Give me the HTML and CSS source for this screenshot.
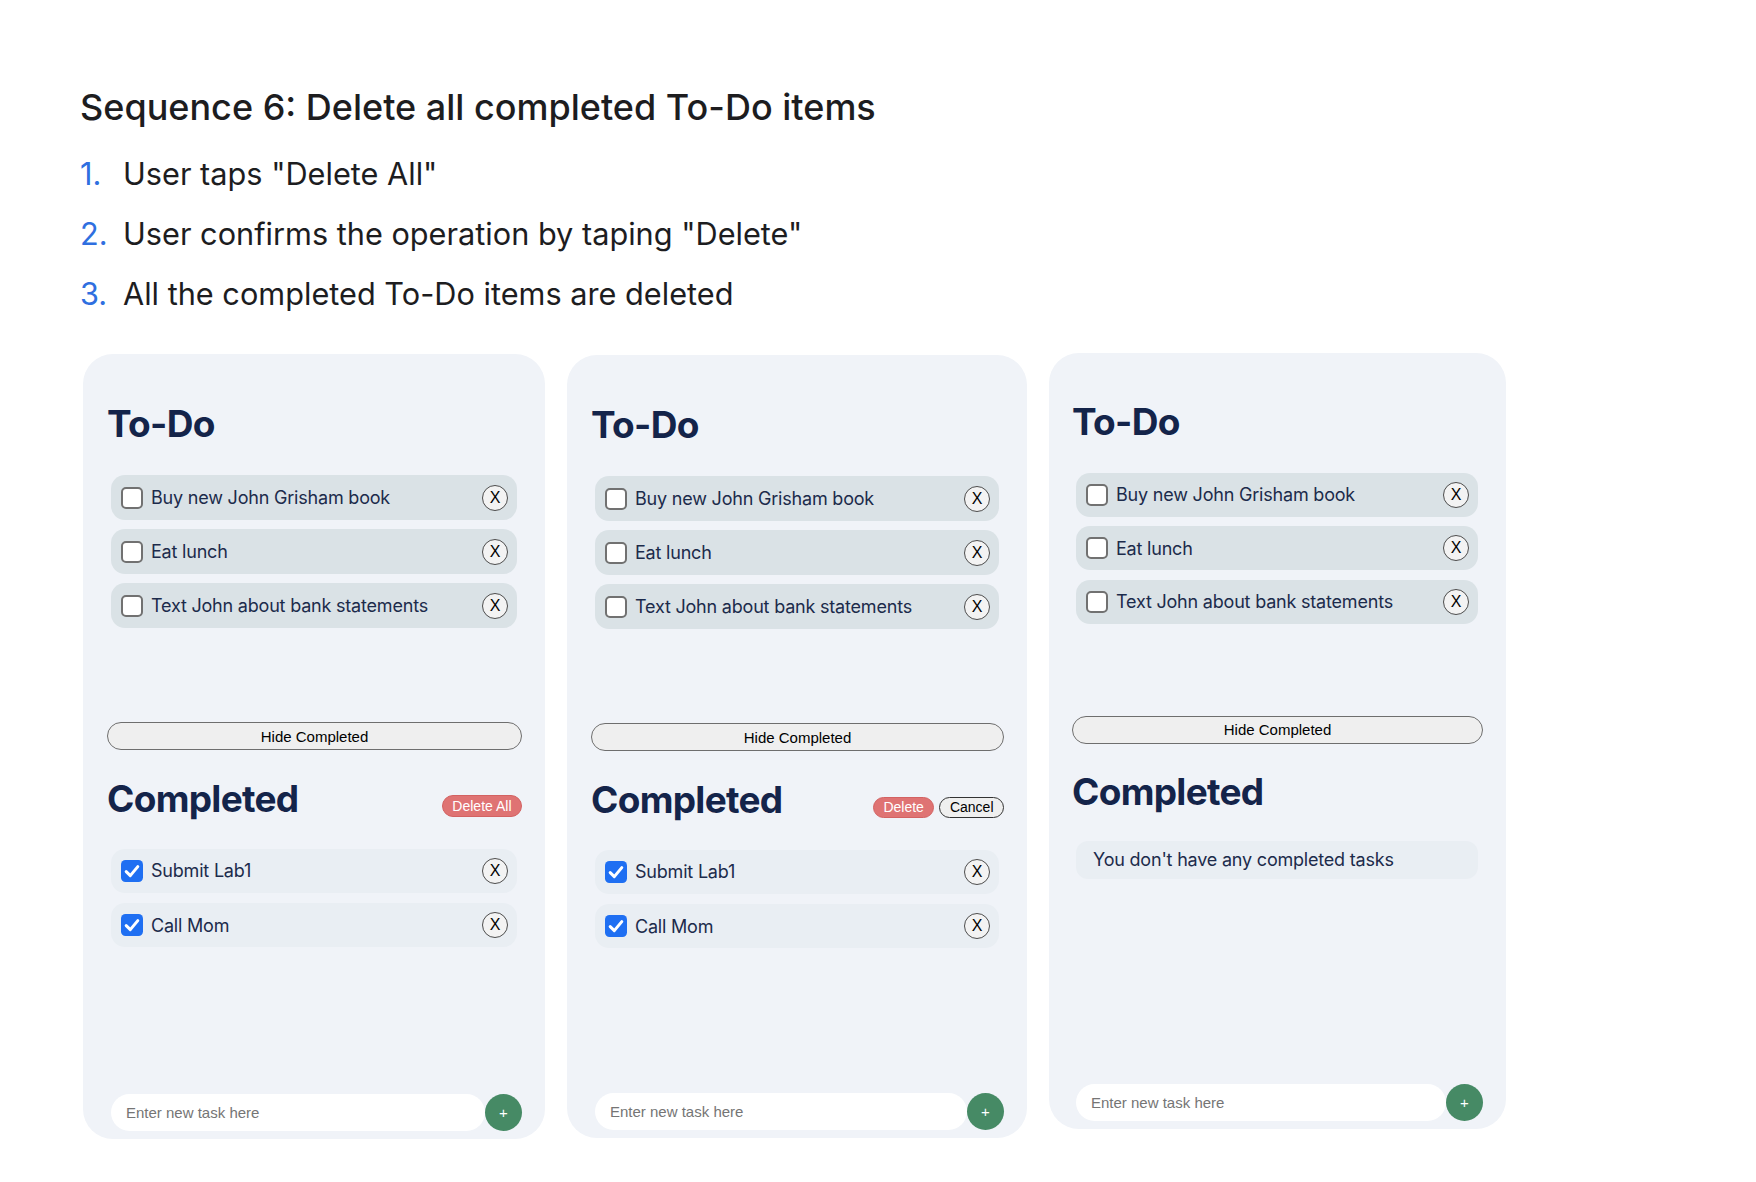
FILE: index.html
```html
<!DOCTYPE html>
<html lang="en">
<head>
<meta charset="utf-8">
<title>Sequence 6: Delete all completed To-Do items</title>
<link rel="stylesheet" href="styles.css">
</head>
<body>
<main class="page">
  <h1 class="title">Sequence 6: Delete all completed To-Do items</h1>
  <ol class="steps">
    <li class="step"><span class="step-num">1.</span><span class="step-text">User taps "Delete All"</span></li>
    <li class="step"><span class="step-num">2.</span><span class="step-text">User confirms the operation by taping "Delete"</span></li>
    <li class="step"><span class="step-num">3.</span><span class="step-text">All the completed To-Do items are deleted</span></li>
  </ol>

  <div class="screens">
    <!-- Screen 1 -->
    <section class="phone phone--a">
      <h2 class="phone-heading todo-title">To-Do</h2>
      <ul class="todo-list">
        <li class="task"><span class="box"></span><span class="task-text">Buy new John Grisham book</span><button class="remove">X</button></li>
        <li class="task"><span class="box"></span><span class="task-text">Eat lunch</span><button class="remove">X</button></li>
        <li class="task"><span class="box"></span><span class="task-text">Text John about bank statements</span><button class="remove">X</button></li>
      </ul>
      <button class="toggle">Hide Completed</button>
      <div class="done-head">
        <h2 class="phone-heading">Completed</h2>
        <div class="actions"><button class="pill pill--danger">Delete All</button></div>
      </div>
      <ul class="done-list">
        <li class="task task--done"><svg class="box-checked" viewBox="0 0 22 22" width="22" height="22"><rect x="0" y="0" width="22" height="22" rx="4.5" fill="#1f6ff2"/><path d="M5.2 11.6 L9.3 15.6 L16.8 6.6" fill="none" stroke="#fff" stroke-width="3" stroke-linecap="round" stroke-linejoin="round"/></svg><span class="task-text">Submit Lab1</span><button class="remove">X</button></li>
        <li class="task task--done"><svg class="box-checked" viewBox="0 0 22 22" width="22" height="22"><rect x="0" y="0" width="22" height="22" rx="4.5" fill="#1f6ff2"/><path d="M5.2 11.6 L9.3 15.6 L16.8 6.6" fill="none" stroke="#fff" stroke-width="3" stroke-linecap="round" stroke-linejoin="round"/></svg><span class="task-text">Call Mom</span><button class="remove">X</button></li>
      </ul>
      <div class="composer"><input class="new-task" type="text" placeholder="Enter new task here"><button class="add">+</button></div>
    </section>

    <!-- Screen 2 -->
    <section class="phone phone--b">
      <h2 class="phone-heading todo-title">To-Do</h2>
      <ul class="todo-list">
        <li class="task"><span class="box"></span><span class="task-text">Buy new John Grisham book</span><button class="remove">X</button></li>
        <li class="task"><span class="box"></span><span class="task-text">Eat lunch</span><button class="remove">X</button></li>
        <li class="task"><span class="box"></span><span class="task-text">Text John about bank statements</span><button class="remove">X</button></li>
      </ul>
      <button class="toggle">Hide Completed</button>
      <div class="done-head">
        <h2 class="phone-heading">Completed</h2>
        <div class="actions"><button class="pill pill--danger pill--sm">Delete</button><button class="pill pill--plain">Cancel</button></div>
      </div>
      <ul class="done-list">
        <li class="task task--done"><svg class="box-checked" viewBox="0 0 22 22" width="22" height="22"><rect x="0" y="0" width="22" height="22" rx="4.5" fill="#1f6ff2"/><path d="M5.2 11.6 L9.3 15.6 L16.8 6.6" fill="none" stroke="#fff" stroke-width="3" stroke-linecap="round" stroke-linejoin="round"/></svg><span class="task-text">Submit Lab1</span><button class="remove">X</button></li>
        <li class="task task--done"><svg class="box-checked" viewBox="0 0 22 22" width="22" height="22"><rect x="0" y="0" width="22" height="22" rx="4.5" fill="#1f6ff2"/><path d="M5.2 11.6 L9.3 15.6 L16.8 6.6" fill="none" stroke="#fff" stroke-width="3" stroke-linecap="round" stroke-linejoin="round"/></svg><span class="task-text">Call Mom</span><button class="remove">X</button></li>
      </ul>
      <div class="composer"><input class="new-task" type="text" placeholder="Enter new task here"><button class="add">+</button></div>
    </section>

    <!-- Screen 3 -->
    <section class="phone phone--c">
      <h2 class="phone-heading todo-title">To-Do</h2>
      <ul class="todo-list">
        <li class="task"><span class="box"></span><span class="task-text">Buy new John Grisham book</span><button class="remove">X</button></li>
        <li class="task"><span class="box"></span><span class="task-text">Eat lunch</span><button class="remove">X</button></li>
        <li class="task"><span class="box"></span><span class="task-text">Text John about bank statements</span><button class="remove">X</button></li>
      </ul>
      <button class="toggle">Hide Completed</button>
      <div class="done-head">
        <h2 class="phone-heading">Completed</h2>
      </div>
      <div class="empty">You don't have any completed tasks</div>
      <div class="composer"><input class="new-task" type="text" placeholder="Enter new task here"><button class="add">+</button></div>
    </section>
  </div>
</main>
</body>
</html>
```

FILE: styles.css
```css
* { box-sizing: border-box; }

html, body { margin: 0; background: #ffffff; }

body {
  font-family: Inter, "Noto Sans", "Liberation Sans", sans-serif;
  color: #1d1d1f;
}

.page {
  padding: 87px 0 0 80px;
}

.title {
  margin: 0;
  font-size: 36px;
  line-height: 40px;
  font-weight: 500;
  letter-spacing: 0;
  color: #1d1d1f;
}

.steps {
  list-style: none;
  margin: 17px 0 0;
  padding: 0;
}

.step {
  display: flex;
  font-size: 30.7px;
  line-height: 60px;
  font-weight: 400;
  color: #1d1d1f;
}

.step-num {
  width: 43px;
  flex: none;
  color: #2f6fe0;
}

.screens {
  display: flex;
  align-items: flex-start;
  gap: 22px;
  margin-top: 30px;
  padding-left: 3px;
}

/* ---------- phone card ---------- */
.phone {
  display: flex;
  flex-direction: column;
  flex: none;
  background: #f0f3f8;
  border-radius: 30px;
  padding: 0 23px 8px 24px;
}

.phone--a { width: 462px; height: 785px; }
.phone--b { width: 460px; height: 783px; margin-top: 1px; }
.phone--c { width: 457px; height: 776px; margin-top: -1px; padding-left: 23px; }

.phone-heading {
  margin: 0;
  font-size: 37px;
  line-height: 44px;
  font-weight: 700;
  color: #14244a;
  letter-spacing: -0.7px;
}

.todo-title { margin-top: 48px; }

.todo-list {
  list-style: none;
  margin: 29px 5px 0 4px;
  padding: 0;
  height: 247px;
  display: flex;
  flex-direction: column;
  gap: 9px;
}

.task {
  display: flex;
  align-items: center;
  height: 45px;
  flex: none;
  padding: 0 9px 0 10px;
  border-radius: 14px;
  background: #dae2e6;
}

.box {
  width: 22px;
  height: 22px;
  flex: none;
  border: 2px solid #717171;
  border-radius: 5px;
  background: #ffffff;
}

.box-checked { flex: none; display: block; }

.task-text {
  flex: 1;
  margin-left: 8px;
  font-size: 18px;
  letter-spacing: -0.2px;
  color: #1c2b4b;
  white-space: nowrap;
}

.remove {
  width: 26px;
  height: 26px;
  flex: none;
  display: flex;
  align-items: center;
  justify-content: center;
  padding: 0;
  border: 1px solid #4d4d4d;
  border-radius: 50%;
  background: #f3f3f3;
  color: #000;
  font: 16px "Liberation Sans", Arial, sans-serif;
}

.toggle {
  width: 100%;
  height: 28px;
  flex: none;
  padding: 0;
  border: 1.5px solid #6e6e6e;
  border-radius: 14px;
  background: #efefef;
  color: #000;
  font: 15px "Liberation Sans", Arial, sans-serif;
}

.done-head {
  display: flex;
  align-items: flex-end;
  justify-content: space-between;
  margin-top: 27px;
}

.actions {
  display: flex;
  gap: 5px;
  margin-bottom: 4.5px;
}

.pill {
  height: 22px;
  padding: 0 9.5px;
  border-radius: 11px;
  font: 14px "Liberation Sans", Arial, sans-serif;
}

.pill--danger {
  border: 1px solid #d36262;
  background: #df7373;
  color: #ffffff;
}

.pill--sm { height: 21px; padding: 0 9.5px; }

.pill--plain {
  height: 21px;
  border: 1px solid #333;
  background: #efefef;
  color: #000;
}

.done-list {
  list-style: none;
  margin: 27.5px 5px 0 4px;
  padding: 0;
  display: flex;
  flex-direction: column;
  gap: 10.5px;
}

.task--done {
  height: 44px;
  background: #e9eef3;
}

.empty {
  display: flex;
  align-items: center;
  height: 38px;
  margin: 27px 5px 0 4px;
  padding-left: 17px;
  border-radius: 12px;
  background: #e9eef3;
  font-size: 18px;
  letter-spacing: -0.2px;
  color: #1c2b4b;
}

.composer {
  display: flex;
  margin-top: auto;
  margin-left: 4px;
}

.new-task {
  flex: 1;
  min-width: 0;
  height: 37px;
  padding: 0 0 0 15px;
  border: 0;
  border-radius: 18.5px;
  background: #ffffff;
  color: #000;
  font: 15px "Liberation Sans", Arial, sans-serif;
  outline: none;
}

.new-task::placeholder { color: #757575; }

.add {
  width: 37px;
  height: 37px;
  flex: none;
  padding: 0;
  border: 0;
  border-radius: 50%;
  background: #468a65;
  color: #ffffff;
  font: 15px "Liberation Sans", Arial, sans-serif;
}

/* third screen is a touch smaller */
.phone--c .todo-title { margin-top: 47px; }
.phone--c .todo-list { margin-top: 28.5px; height: 243px; gap: 9.7px; }
.phone--c .task { height: 44px; }
.phone--c .done-head { margin-top: 26px; }
```
